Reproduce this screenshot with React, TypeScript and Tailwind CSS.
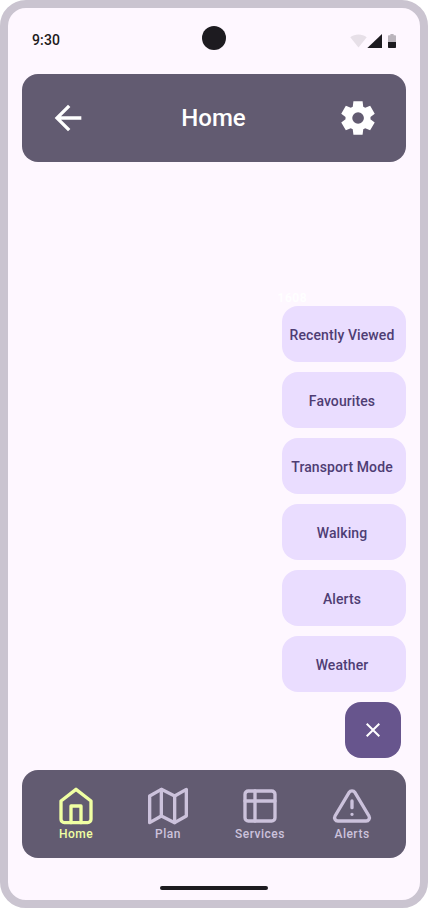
import React from "react";

const actions = ["Recently Viewed", "Favourites", "Transport Mode", "Walking", "Alerts", "Weather"];

const strokeProps = {
  width: 40,
  height: 40,
  viewBox: "0 0 24 24",
  fill: "none",
  stroke: "currentColor",
  strokeWidth: 2,
  strokeLinecap: "round" as const,
  strokeLinejoin: "round" as const,
};

const tabs = [
  {
    label: "Home",
    active: true,
    icon: (
      <svg {...strokeProps}>
        <path d="M3 9l9-7 9 7v11a2 2 0 0 1-2 2H5a2 2 0 0 1-2-2z" />
        <path d="M9 22V12h6v10" />
      </svg>
    ),
  },
  {
    label: "Plan",
    active: false,
    icon: (
      <svg {...strokeProps}>
        <path d="M1 6v16l7-4 8 4 7-4V2l-7 4-8-4-7 4z" />
        <path d="M8 2v16M16 6v16" />
      </svg>
    ),
  },
  {
    label: "Services",
    active: false,
    icon: (
      <svg {...strokeProps}>
        <rect x="3" y="3" width="18" height="18" rx="2" />
        <path d="M3 9h18M9 3v18" />
      </svg>
    ),
  },
  {
    label: "Alerts",
    active: false,
    icon: (
      <svg {...strokeProps}>
        <path d="M10.29 3.86L1.82 18a2 2 0 0 0 1.71 3h16.94a2 2 0 0 0 1.71-3L13.71 3.86a2 2 0 0 0-3.42 0z" />
        <path d="M12 9v4M12 17h.01" />
      </svg>
    ),
  },
];

function StatusBar() {
  return (
    <div className="grid h-[52px] grid-cols-3 items-end px-6">
      <span className="pb-[10px] text-sm leading-5 font-medium tracking-[0.14px] text-[#1d1b20]">9:30</span>
      <span className="mb-[10px] size-6 justify-self-center rounded-full bg-[#1d1b20]" />
      <svg className="mb-[10px] justify-self-end" width="46" height="17" viewBox="0 0 46 17">
        <path d="M8.5 14.4 0.3 4.2C2.6 2.4 5.4 1.4 8.5 1.4s5.9 1 8.2 2.8z" fill="#1d1b20" fillOpacity="0.1" />
        <path d="M17.3 15 32 1v14z" fill="#1d1b20" />
        <path d="M38 9V3.2c0-.6.4-1 1-1h1.400V1h3.200v1.200H45c.6 0 1 .4 1 1V9z" fill="#1d1b20" fillOpacity="0.3" />
        <path d="M38 9h8v5c0 .6-.4 1-1 1h-6c-.6 0-1-.4-1-1z" fill="#1d1b20" />
      </svg>
    </div>
  );
}

function Header() {
  return (
    <header className="mx-[14px] mt-[14px] flex h-[88px] shrink-0 items-center justify-between rounded-2xl bg-[#625b71] pr-7 pl-[26px] text-white">
      <svg width="40" height="40" viewBox="0 0 24 24" fill="currentColor">
        <path d="M7.825 13l5.6 5.6L12 20l-8-8 8-8 1.425 1.4-5.6 5.6H20v2z" />
      </svg>
      <h1 className="pl-px text-2xl leading-8 font-medium">Home</h1>
      <svg width="40" height="40" viewBox="0 0 24 24" fill="currentColor">
        <path
          fillRule="evenodd"
          d="M9.25 22l-.4-3.2a3.7 3.7 0 0 1-.613-.3 8 8 0 0 1-.562-.375L4.7 19.375l-2.75-4.75 2.575-1.95a2.400 2.400 0 0 1-.025-.338v-.675c0-.108.008-.22.025-.337L1.950 9.375l2.750-4.750 2.975 1.250q.275-.2.575-.375t.6-.3l.4-3.200h5.500l.4 3.200q.325.125.613.300t.562.375l2.975-1.250 2.750 4.750-2.575 1.950q.025.175.025.337v.676q0 .162-.05.337l2.575 1.950-2.750 4.750-2.950-1.250q-.275.200-.575.375t-.6.300l-.4 3.200zM12.050 15.500a3.500 3.500 0 1 0 0-7 3.500 3.500 0 0 0 0 7z"
        />
      </svg>
    </header>
  );
}

export default function App() {
  return (
    <div
      className="flex h-[908px] w-[428px] flex-col rounded-[26px] border-8 border-[#cac4d0] bg-[#fef7ff] font-[Roboto,sans-serif]"
    >
      <StatusBar />
      <Header />
      <main className="flex flex-1 flex-col items-end justify-end px-[14px] pb-3">
        <span className="mr-[99px] text-xs leading-4 font-semibold tracking-[0.5px] text-white">1608</span>
        <div className="flex flex-col gap-[10px]">
          {actions.map((label) => (
            <button
              key={label}
              className="flex h-14 w-[124px] items-center justify-center rounded-2xl bg-[#eaddff] pr-1 pt-0.5 text-sm leading-5 font-medium tracking-[0.1px] whitespace-nowrap text-[#4f3d74]"
            >
              {label}
            </button>
          ))}
        </div>
        <button className="mt-[10px] mr-[5px] flex size-14 items-center justify-center rounded-2xl bg-[#67558d] text-white">
          <svg width="24" height="24" viewBox="0 0 24 24" fill="currentColor">
            <path d="M6.400 19L5 17.600l5.600-5.600L5 6.400 6.400 5l5.600 5.600L17.600 5 19 6.400 13.400 12l5.600 5.600-1.400 1.400-5.600-5.600z" />
          </svg>
        </button>
      </main>
      <nav className="mx-[14px] grid h-[88px] shrink-0 grid-cols-4 rounded-2xl bg-[#625b71] px-2 pt-4">
        {tabs.map((tab) => (
          <div
            key={tab.label}
            className={`flex flex-col items-center ${tab.active ? "text-[#f0ffa3]" : "text-[#ccc2dc]"}`}
          >
            {tab.icon}
            <span className="text-xs leading-4 font-medium tracking-[0.5px]">{tab.label}</span>
          </div>
        ))}
      </nav>
      <div className="mt-7 mb-[10px] h-1 w-[108px] shrink-0 self-center rounded-full bg-[#1d1b20]" />
    </div>
  );
}
